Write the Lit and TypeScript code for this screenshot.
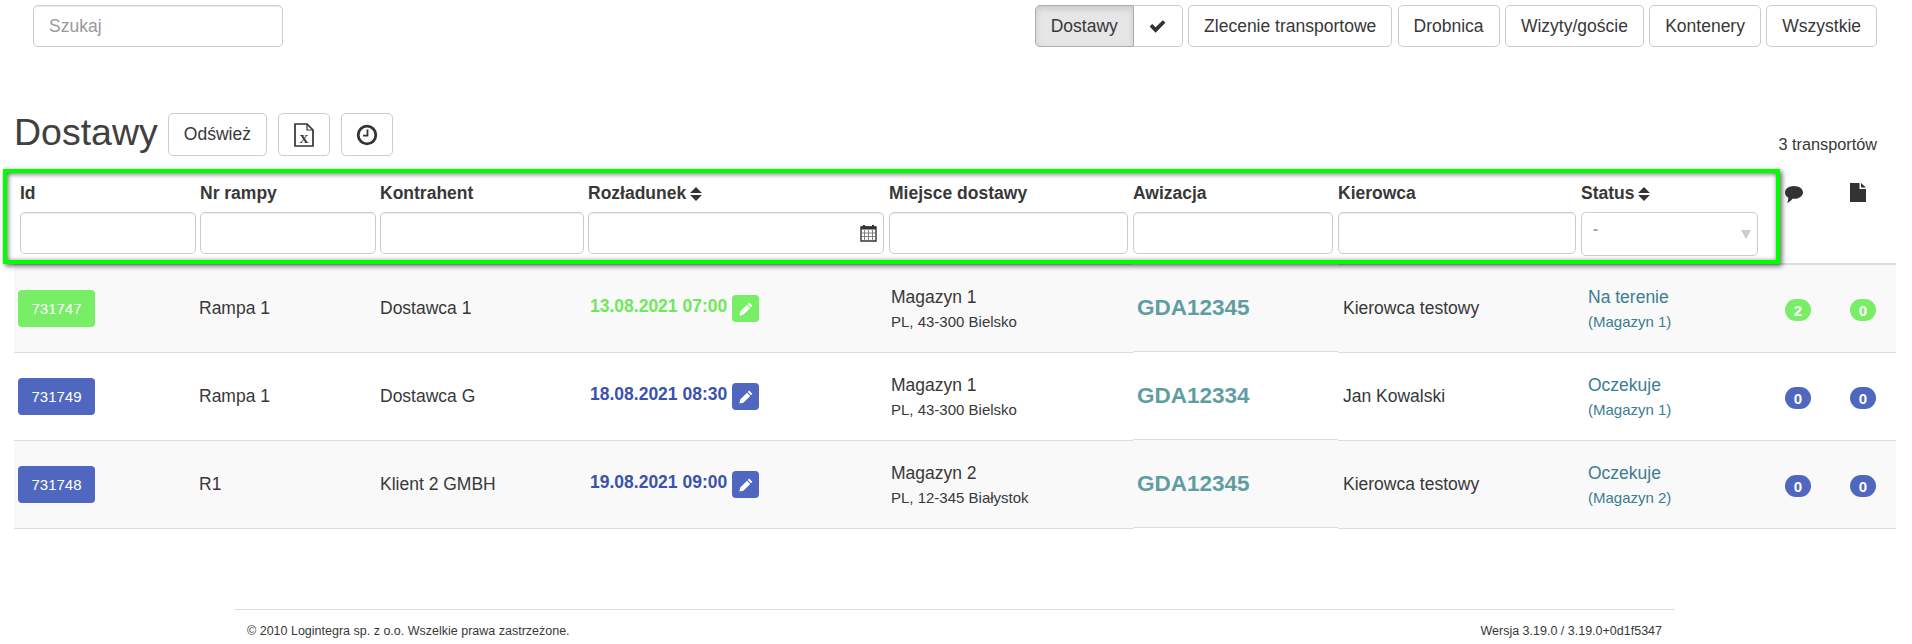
import { LitElement, html, css } from "lit";
import { customElement } from "lit/decorators.js";

const sortIcon = html`<svg class="sort" viewBox="0 0 11 13"><path d="M5.5 0 11 5.6H0zM0 7.4h11L5.5 13z" fill="#333"/></svg>`;
const pencil = html`<svg class="pen" viewBox="0 0 14 14"><path d="M10.2.6 13.4 3.8 12 5.2 8.8 2zM8 2.8 11.2 6 4.4 12.8.4 13.6 1.2 9.6z" fill="currentColor"/><path d="M1.2 9.6 4.4 12.8" stroke="#0002" stroke-width=".8"/></svg>`;

type Row = { id: string; ramp: string; party: string; date: string; place: string; addr: string; plate: string; driver: string; status: string; loc: string; c: string; f: string; tone: string };
const rows: Row[] = [
  { id: "731747", ramp: "Rampa 1", party: "Dostawca 1", date: "13.08.2021 07:00", place: "Magazyn 1", addr: "PL, 43-300 Bielsko", plate: "GDA12345", driver: "Kierowca testowy", status: "Na terenie", loc: "(Magazyn 1)", c: "2", f: "0", tone: "green" },
  { id: "731749", ramp: "Rampa 1", party: "Dostawca G", date: "18.08.2021 08:30", place: "Magazyn 1", addr: "PL, 43-300 Bielsko", plate: "GDA12334", driver: "Jan Kowalski", status: "Oczekuje", loc: "(Magazyn 1)", c: "0", f: "0", tone: "blue" },
  { id: "731748", ramp: "R1", party: "Klient 2 GMBH", date: "19.08.2021 09:00", place: "Magazyn 2", addr: "PL, 12-345 Białystok", plate: "GDA12345", driver: "Kierowca testowy", status: "Oczekuje", loc: "(Magazyn 2)", c: "0", f: "0", tone: "blue" },
];

@customElement("app-root")
export class AppRoot extends LitElement {
  static styles = css`
    :host { display: block; width: 1912px; height: 644px; overflow: hidden; background: #fff; color: #383838; font-family: "Liberation Sans", Arial, sans-serif; font-size: 17.5px; }
    * { box-sizing: border-box; }
    .top { display: flex; justify-content: space-between; padding: 5px 35px 0 33px; }
    .input { display: block; height: 42px; border: 1px solid #ccc; border-radius: 5px; background: #fff; box-shadow: inset 0 1px 1px rgba(0,0,0,.075); }
    .search { width: 250px; padding: 9px 15px; color: #999; line-height: 23px; }
    .nav { display: flex; gap: 5.3px; }
    .group { display: flex; }
    .btn { display: flex; align-items: center; justify-content: center; height: 42px; padding: 0 15px; border: 1px solid #ccc; border-radius: 5px; background: #fff; color: #383838; white-space: nowrap; }
    .btn.active { background: #e6e6e6; border-color: #adadad; border-radius: 5px 0 0 5px; box-shadow: inset 0 3px 6px rgba(0,0,0,.125); width: 99px; padding: 0; }
    .btn.check { width: 49px; padding: 0; border-left: 0; border-radius: 0 5px 5px 0; }
    .check svg { width: 17px; height: 13px; }
    .title { display: flex; margin-top: 66px; padding: 0 35px 0 14px; height: 43px; }
    h1 { margin: -2px 10px 0 0; font-size: 37.5px; font-weight: 400; line-height: 43px; color: #404040; }
    .tools { display: flex; gap: 11px; }
    .tools .btn { height: 43px; }
    .icon-btn { width: 52px; padding: 0; }
    .count { margin: 0 0 2px auto; font-size: 16.25px; line-height: 20px; align-self: flex-end; }
    .tablewrap { position: relative; margin: 16px 0 0 14px; width: 1882px; }
    table { width: 1882px; table-layout: fixed; border-collapse: separate; border-spacing: 0; }
    .c1 { width: 186px; } .c2 { width: 180px; } .c3 { width: 208px; } .c4 { width: 301px; } .c5 { width: 244px; }
    .c6 { width: 205px; } .c7 { width: 243px; } .c8 { width: 199px; } .c9 { width: 65px; } .c10 { width: 51px; }
    th { padding: 9px 5px 6px 0; border-bottom: 2px solid #ddd; text-align: left; vertical-align: top; font-weight: 700; height: 93px; }
    th.tight { padding-right: 4px; }
    th.first { padding-left: 6px; }
    th.last8 { padding-right: 22px; }
    .label { display: flex; align-items: center; gap: 4px; height: 25px; margin-bottom: 6px; white-space: nowrap; }
    .sort { width: 12px; height: 14px; }
    .date-input { position: relative; }
    .cal { position: absolute; right: 6px; top: 11px; width: 17px; height: 18px; }
    .select { position: relative; height: 44px; color: #999; font-weight: 700; font-size: 15px; padding: 7px 0 0 11px; box-shadow: none; }
    .select i { position: absolute; right: 6px; top: 17px; border: 5px solid transparent; border-top: 9px solid #ccc; border-bottom: 0; }
    .head-icon { display: block; }
    .ic-comment { width: 18px; height: 17px; margin: 5px 0 0 5px; }
    .ic-file { width: 16px; height: 19px; margin: 2px 0 0 5px; }
    td { height: 88px; padding: 0 5px 0 0; border-bottom: 1px solid #ddd; vertical-align: middle; line-height: 25px; }
    tr.odd td { background: #f9f9f9; }
    .idcell { padding-left: 4px; }
    .id { display: flex; align-items: center; justify-content: center; width: 77px; height: 37px; border-radius: 4px; color: #fff; font-size: 15px; }
    .green .id, .green .penbtn, .green .badge { background: #77ee66; }
    .blue .id, .blue .penbtn, .blue .badge { background: #4f67bf; }
    .ramp { margin-left: -1px; display: inline-block; }
    .datecell { padding-left: 2px; }
    .dateline { display: flex; align-items: center; gap: 5px; }
    .date { font-weight: 700; position: relative; top: -2px; white-space: nowrap; }
    .green .date { color: #6fe85c; }
    .blue .date { color: #3a52ad; }
    .penbtn { display: flex; align-items: center; justify-content: center; width: 27px; height: 27px; border-radius: 4px; color: #fff; }
    .pen { width: 14px; height: 14px; }
    .place { padding-left: 2px; }
    .stack { display: flex; flex-direction: column; }
    .small { font-size: 15px; line-height: 21px; margin-top: 1px; }
    .stack .main { line-height: 25px; }
    .plate { padding-left: 4px; font-size: 22.5px; font-weight: 700; color: #5f9ea0; position: relative; top: -1px; }
    .driver { padding-left: 5px; }
    .status { padding-left: 7px; color: #3c7d91; }
    .bc1, .bc2 { padding-left: 5px; }
    .badge { display: flex; align-items: center; justify-content: center; width: 26px; height: 22px; border-radius: 11px; color: #fff; font-size: 15px; font-weight: 700; margin-top: 3px; }
    .highlight { position: absolute; left: -11px; top: -3px; width: 1777px; height: 95px; border: 4px solid #00ff00; box-shadow: 2px 2px 5px rgba(0,0,0,.6), inset 1px 1px 5px rgba(0,0,0,.6); pointer-events: none; }
    .footer { width: 1440px; margin: 80px 0 0 235px; border-top: 1px solid #ddd; display: flex; justify-content: space-between; padding: 13px 13px 0 12px; font-size: 12.5px; line-height: 16px; }
  `;

  private th(label: string, cls: string, sorted = false, extra: unknown = null) {
    return html`<th class=${cls}><div class="label">${label}${sorted ? sortIcon : null}</div>${extra ?? html`<div class="input"></div>`}</th>`;
  }

  render() {
    const calendar = html`<div class="input date-input"><svg class="cal" viewBox="0 0 17 18"><path d="M1 3h15v14H1z" fill="#fff" stroke="#333" stroke-width="1.4"/><path d="M1 2.500h15v3H1z" fill="#333"/><path d="M4 1v3M13 1v3" stroke="#333" stroke-width="2"/><path d="M1 9h15M1 12.500h15M4.500 6v11M8.500 6v11M12.500 6v11" stroke="#666" stroke-width=".8"/></svg></div>`;
    const select = html`<div class="input select">-<i></i></div>`;
    return html`
      <div class="top">
        <div class="input search">Szukaj</div>
        <div class="nav">
          <div class="group">
            <div class="btn active">Dostawy</div>
            <div class="btn check"><svg viewBox="0 0 17 13"><path d="M.6 6.600 3.200 4 6.600 7.200 13.800.2 16.400 2.800 6.600 12.800z" fill="#333"/></svg></div>
          </div>
          <div class="btn">Zlecenie transportowe</div>
          <div class="btn">Drobnica</div>
          <div class="btn">Wizyty/goście</div>
          <div class="btn">Kontenery</div>
          <div class="btn">Wszystkie</div>
        </div>
      </div>
      <div class="title">
        <h1>Dostawy</h1>
        <div class="tools">
          <div class="btn">Odśwież</div>
          <div class="btn icon-btn">
            <svg width="20" height="24" viewBox="0 0 20 24">
              <path d="M1 1h12l6 6v16H1z" fill="#fff" stroke="#333" stroke-width="1.7"/>
              <path d="M13 1v6h6" fill="none" stroke="#333" stroke-width="1.2"/>
              <text x="10" y="20" text-anchor="middle" font-family="Liberation Serif" font-weight="700" font-size="13" fill="#333">X</text>
            </svg>
          </div>
          <div class="btn icon-btn">
            <svg width="22" height="22" viewBox="0 0 22 22">
              <circle cx="11" cy="11" r="8.800" fill="#fff" stroke="#333" stroke-width="2.800"/>
              <path d="M11.500 5.500v6.200H7" fill="none" stroke="#333" stroke-width="1.800"/>
            </svg>
          </div>
        </div>
        <div class="count">3 transportów</div>
      </div>
      <div class="tablewrap">
        <table>
          <colgroup>
            ${[1, 2, 3, 4, 5, 6, 7, 8, 9, 10].map((n) => html`<col class="c${n}" />`)}
          </colgroup>
          <thead>
            <tr>
              ${this.th("Id", "first tight")}
              ${this.th("Nr rampy", "tight")}
              ${this.th("Kontrahent", "tight")}
              ${this.th("Rozładunek", "", true, calendar)}
              ${this.th("Miejsce dostawy", "")}
              ${this.th("Awizacja", "")}
              ${this.th("Kierowca", "")}
              ${this.th("Status", "last8", true, select)}
              <th>
                <svg class="head-icon ic-comment" viewBox="0 0 18 17"><path d="M9 0c5 0 9 2.800 9 6.400s-4 6.400-9 6.400c-.5 0-1 0-1.500-.1C6.300 14.500 4.300 16.300 1.800 17c1-1.500 1.500-3 1.500-5.300C1.300 10.500 0 8.600 0 6.400 0 2.800 4 0 9 0z" fill="#333"/></svg>
              </th>
              <th>
                <svg class="head-icon ic-file" viewBox="0 0 16 19"><path d="M0 0h9.500v6H16v13H0z M11 0l5 4.600H11z" fill="#333"/></svg>
              </th>
            </tr>
          </thead>
          <tbody>
            ${rows.map(
              (r, i) => html`
                <tr class="${r.tone} ${i % 2 === 0 ? "odd" : ""}">
                  <td class="idcell"><div class="id">${r.id}</div></td>
                  <td><span class="ramp">${r.ramp}</span></td>
                  <td>${r.party}</td>
                  <td class="datecell">
                    <div class="dateline"><span class="date">${r.date}</span><span class="penbtn">${pencil}</span></div>
                  </td>
                  <td class="place"><div class="stack"><span class="main">${r.place}</span><span class="small">${r.addr}</span></div></td>
                  <td class="plate">${r.plate}</td>
                  <td class="driver">${r.driver}</td>
                  <td class="status"><div class="stack"><span class="main">${r.status}</span><span class="small">${r.loc}</span></div></td>
                  <td class="bc1"><div class="badge">${r.c}</div></td>
                  <td class="bc2"><div class="badge">${r.f}</div></td>
                </tr>
              `
            )}
          </tbody>
        </table>
        <div class="highlight"></div>
      </div>
      <div class="footer">
        <span>© 2010 Logintegra sp. z o.o. Wszelkie prawa zastrzeżone.</span>
        <span>Wersja 3.19.0 / 3.19.0+0d1f5347</span>
      </div>
    `;
  }
}
